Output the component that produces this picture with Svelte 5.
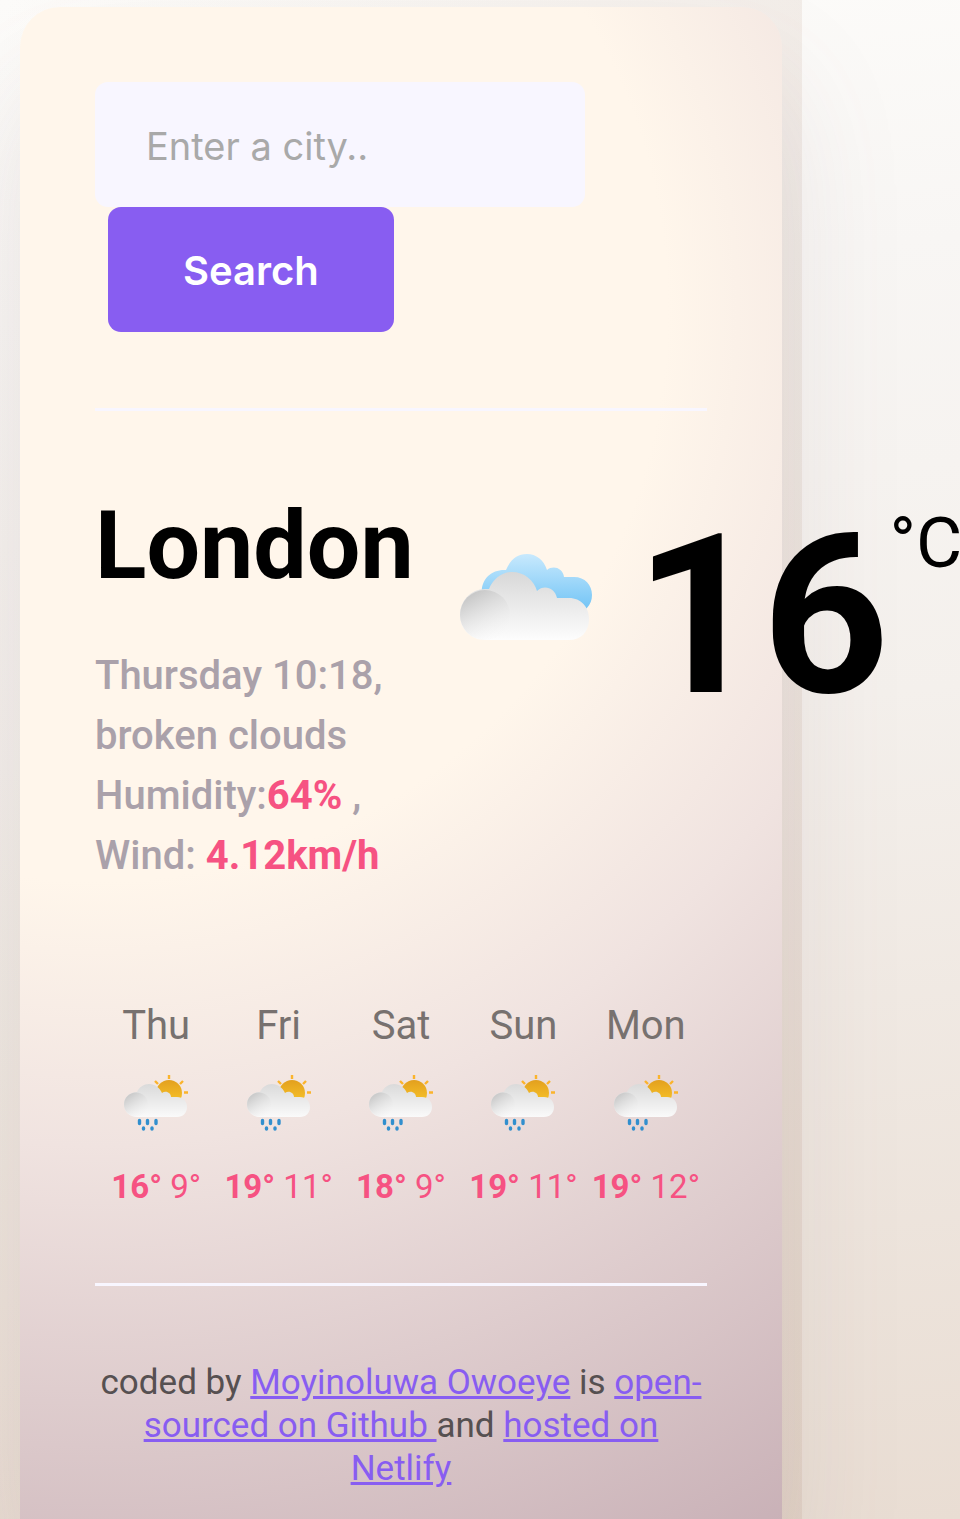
<script>
  const forecast = [
    { day: 'Thu', max: 16, min: 9 },
    { day: 'Fri', max: 19, min: 11 },
    { day: 'Sat', max: 18, min: 9 },
    { day: 'Sun', max: 19, min: 11 },
    { day: 'Mon', max: 19, min: 12 }
  ];
  let city = $state('');
</script>

<div class="page">
  <main class="card">
    <form onsubmit={(e) => e.preventDefault()}>
      <input type="search" placeholder="Enter a city.." aria-label="City" bind:value={city} />
      <button type="submit">Search</button>
    </form>

    <section class="current">
      <div class="place">
        <h1>London</h1>
        <p>
          Thursday 10:18, broken clouds<br />
          Humidity:<strong>64%</strong> ,<br />
          Wind: <strong>4.12km/h</strong>
        </p>
      </div>
      <div class="reading">
        <svg class="clouds" viewBox="0 0 180 130" role="img" aria-label="Broken clouds">
          <defs>
            <linearGradient id="sky" x1="0" y1="0" x2="0" y2="1">
              <stop offset="0" stop-color="#c8e9fd" />
              <stop offset="1" stop-color="#6dc2f5" />
            </linearGradient>
            <linearGradient id="cloud" x1="0" y1="0" x2="0" y2="1">
              <stop offset="0" stop-color="#d8d8d8" />
              <stop offset="1" stop-color="#fdfdfd" />
            </linearGradient>
            <linearGradient id="puff" x1="0.25" y1="0.1" x2="0.7" y2="0.9">
              <stop offset="0" stop-color="#c9c9c9" />
              <stop offset="1" stop-color="#f6f6f6" stop-opacity="0.2" />
            </linearGradient>
          </defs>
          <path fill="url(#sky)" d="M42 64C40 49 51 38 66 39C70 29 77 23 87 23C96 23 104 29 107 39C113 34 123 37 124 46H134C145 46 152 54 152 64C152 74 145 82 134 82H60Z" />
          <path fill="url(#cloud)" d="M20 84C20 70 31 58 45 58H49C53 48 62 41 72 41C84 41 94 49 97 60C104 53 115 57 117 67H129C141 67 149 76 149 88C149 101 141 109 129 109H45C31 109 20 98 20 84Z" />
          <circle cx="45" cy="84" r="25" fill="url(#puff)" />
        </svg>
        <span class="temperature">16</span>
        <span class="unit">°C</span>
      </div>
    </section>

    <section class="forecast">
      {#each forecast as item}
        <div class="day">
          <div class="name">{item.day}</div>
          <svg viewBox="-4 0 120 90" role="img" aria-label="Rain and sun" class="icon">
            <defs>
              <linearGradient id="sun" x1="0" y1="0" x2="0" y2="1">
                <stop offset="0" stop-color="#e3a01e" />
                <stop offset="1" stop-color="#fac92b" />
              </linearGradient>
              <linearGradient id="drizzle" x1="0" y1="0" x2="0" y2="1">
                <stop offset="0" stop-color="#dadada" />
                <stop offset="1" stop-color="#fafafa" />
              </linearGradient>
              <linearGradient id="tuft" x1="0.2" y1="0.1" x2="0.8" y2="0.9">
                <stop offset="0" stop-color="#c9c9c9" />
                <stop offset="1" stop-color="#f3f3f3" stop-opacity="0.2" />
              </linearGradient>
            </defs>
            <circle cx="69" cy="33" r="13" fill="url(#sun)" />
            <path stroke="#fbb42c" stroke-width="2.4" d="M69 15v4M55 21l3 3M83 21l-3 3M84 32.500h4" />
            <path fill="url(#drizzle)" d="M24 44C24 37 30 32 37 32C39 27 44 24 49 24C55 24 60 28 62 33C66 30 71 33 71 37H77C83 37 87 41 87 47C87 53 83 57 77 57H37C30 57 24 52 24 44Z" />
            <circle cx="36" cy="44.500" r="12" fill="url(#tuft)" />
            <path stroke="#318fce" stroke-width="3.400" stroke-linecap="round" d="M39.500 60.500v3M47.500 60.500v3M56 60.500v3M43.500 68v1M52 68v1" />
          </svg>
          <div class="range"><strong>{item.max}°</strong> {item.min}°</div>
        </div>
      {/each}
    </section>

    <footer>
      coded by <a href="#author">Moyinoluwa Owoeye</a> is
      <a href="#source">open-sourced on Github{' '}</a>and
      <a href="#host">hosted on Netlify</a>
    </footer>
  </main>
</div>

<style>
  :global(body) {
    margin: 0;
    background: linear-gradient(175deg, #fdfcfa 0%, #f8f6f4 20%, #f4f0ec 48%, #e9ddd3 100%);
    overflow-x: hidden;
  }

  .page {
    box-sizing: border-box;
    width: calc(100% - 158px);
    height: 100vh;
    padding: 7px 20px 0;
    background: linear-gradient(100deg, rgb(190 160 140 / 0%), rgb(190 160 140 / 20%));
    font-family: Roboto, sans-serif;
  }

  .card {
    box-sizing: border-box;
    min-height: 100%;
    padding: 75px 75px 32px;
    border-radius: 40px 40px 0 0;
    background: radial-gradient(circle at 10% 20%, #fff6eb 41%, #f0e3e0 60%, #c9b1b7 100%);
    box-shadow: 0 76px 127px rgb(120 100 110 / 13%);
  }

  form {
    padding-bottom: 76px;
    border-bottom: 3px solid #f8f6ff;
  }

  input,
  button {
    box-sizing: border-box;
    display: block;
    height: 125px;
    border: 0;
    border-radius: 13px;
    font-family: Inter, sans-serif;
  }

  input {
    width: 80%;
    padding: 3px 51px 0;
    background: #f8f6ff;
    color: #333;
    font-size: 38px;
    appearance: none;
  }

  input::placeholder {
    color: #a9a9a9;
    opacity: 1;
  }

  button {
    margin-left: 13px;
    padding: 2px 75px 0;
    background: #885df1;
    color: #fff;
    font-size: 40px;
    font-weight: 600;
  }

  .current {
    display: flex;
    padding: 77px 0 110px;
  }

  .place {
    flex: 0 0 310px;
  }

  h1 {
    margin: 0 0 42px;
    font-size: 95px;
    line-height: 116px;
  }

  p {
    margin: 0;
    color: #aaa1aa;
    font-size: 40px;
    font-weight: 500;
    line-height: 60px;
  }

  strong {
    color: #f65282;
    font-weight: 700;
  }

  .reading {
    display: flex;
    align-items: flex-start;
    padding-left: 26px;
  }

  .clouds {
    flex: none;
    width: 180px;
    height: 130px;
    margin-top: 43px;
  }

  .temperature {
    margin-left: 15px;
    font-size: 222px;
    font-weight: 700;
    line-height: 256px;
  }

  .unit {
    font-size: 71px;
    line-height: 110px;
  }

  .forecast {
    display: grid;
    grid-template-columns: repeat(5, 1fr);
    padding-bottom: 71px;
    border-bottom: 3px solid #f8f6ff;
    text-align: center;
  }

  .name {
    color: #77716f;
    font-size: 40px;
    line-height: 60px;
  }

  .icon {
    display: block;
    width: 120px;
    height: 90px;
    margin: 4px auto 12px;
  }

  .range {
    color: #f65282;
    font-size: 33px;
    line-height: 50px;
    white-space: nowrap;
  }

  footer {
    padding-top: 75px;
    color: #565051;
    font-size: 35px;
    line-height: 43px;
    text-align: center;
  }

  a {
    color: #885df1;
  }
</style>
